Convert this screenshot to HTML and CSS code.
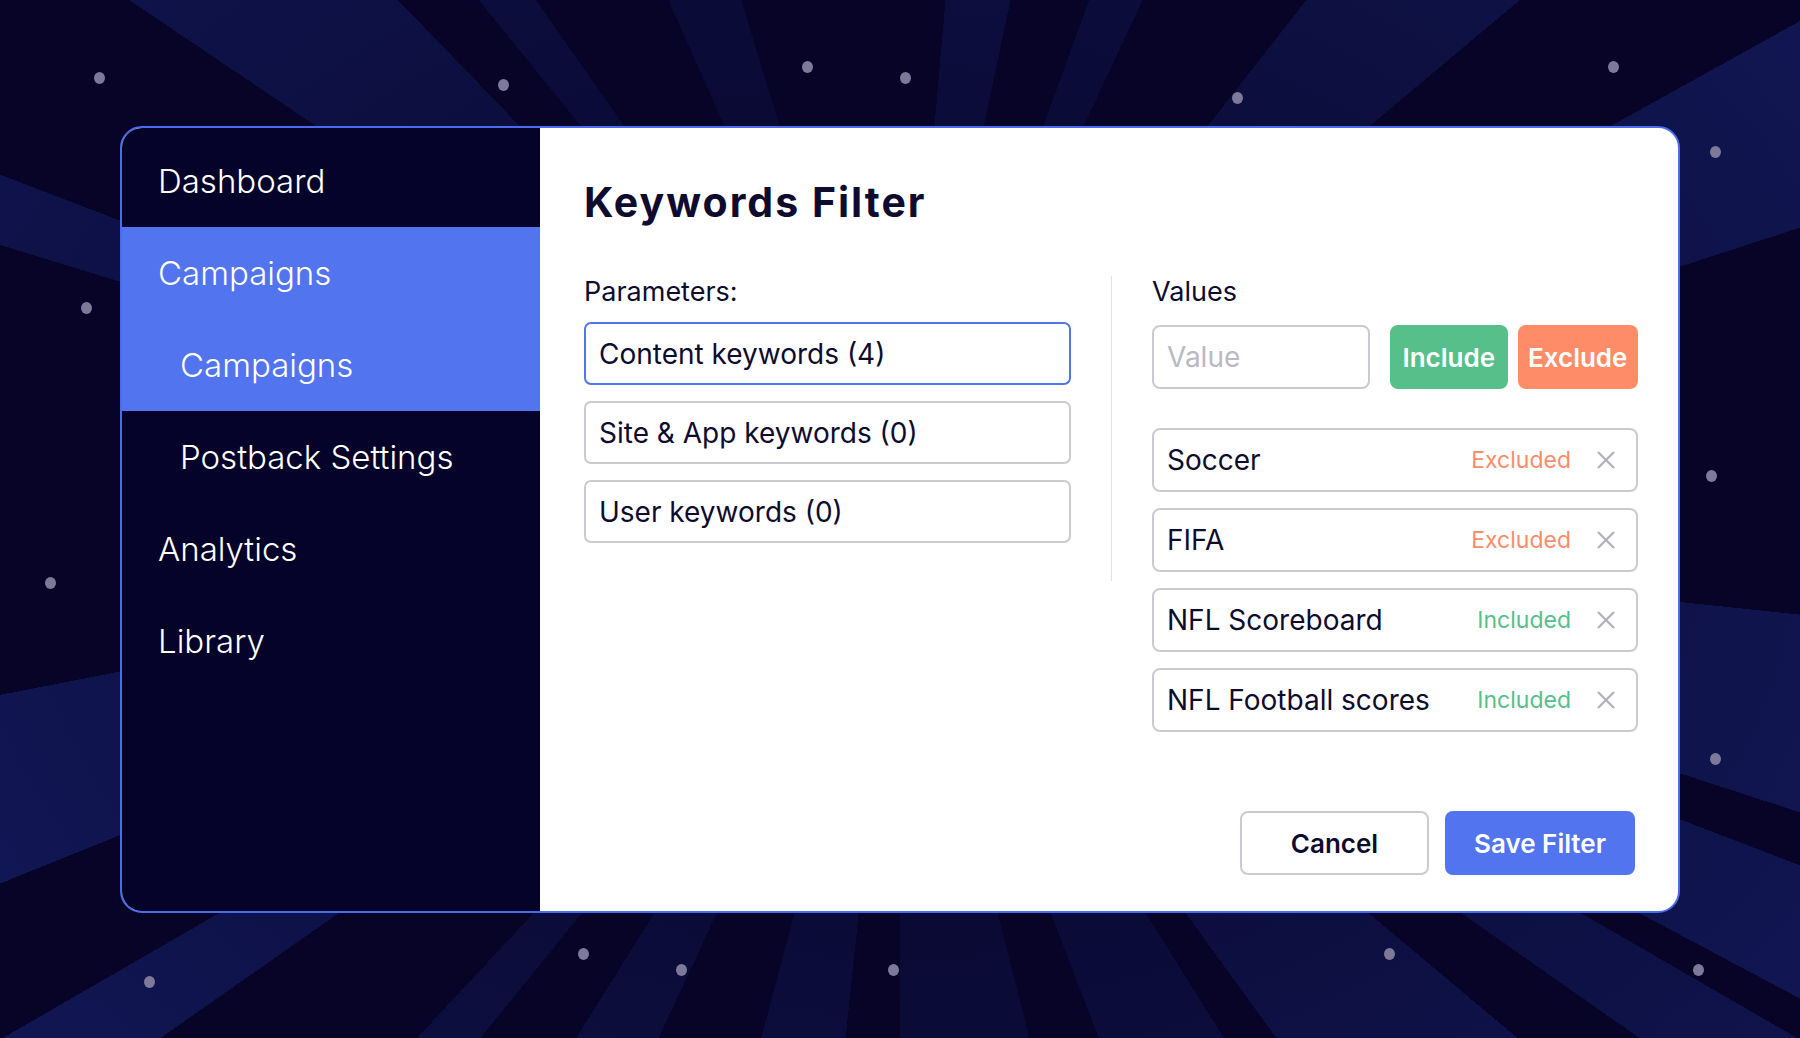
FILE: index.html
```html
<!DOCTYPE html>
<html lang="en">
<head>
    <meta charset="UTF-8">
    <title>Keywords Filter</title>
    <link rel="stylesheet" href="styles.css">
</head>
<body>
    <div class="stars">
        <span class="dot d1"></span><span class="dot d2"></span><span class="dot d3"></span>
        <span class="dot d4"></span><span class="dot d5"></span><span class="dot d6"></span>
        <span class="dot d7"></span><span class="dot d8"></span><span class="dot d9"></span>
        <span class="dot d10"></span><span class="dot d11"></span><span class="dot d12"></span>
        <span class="dot d13"></span><span class="dot d14"></span><span class="dot d15"></span>
        <span class="dot d16"></span><span class="dot d17"></span>
    </div>

    <div class="dialog">
        <nav class="sidebar">
            <div class="nav-item">Dashboard</div>
            <div class="nav-item active">Campaigns</div>
            <div class="nav-item sub active">Campaigns</div>
            <div class="nav-item sub">Postback Settings</div>
            <div class="nav-item">Analytics</div>
            <div class="nav-item">Library</div>
        </nav>

        <main class="panel">
            <h1>Keywords Filter</h1>

            <div class="columns">
                <div class="params">
                    <div class="label">Parameters:</div>
                    <div class="param-list">
                        <div class="param selected">Content keywords (4)</div>
                        <div class="param">Site &amp; App keywords (0)</div>
                        <div class="param">User keywords (0)</div>
                    </div>
                </div>

                <div class="divider"></div>

                <div class="values">
                    <div class="label">Values</div>
                    <div class="value-entry">
                        <input type="text" class="value-input" placeholder="Value">
                        <button class="btn-include">Include</button>
                        <button class="btn-exclude">Exclude</button>
                    </div>

                    <div class="value-list">
                        <div class="value-row">
                            <span class="value-name">Soccer</span>
                            <span class="status excluded">Excluded</span>
                            <svg class="remove" viewBox="0 0 18 18"><path d="M1 1L17 17M17 1L1 17"/></svg>
                        </div>
                        <div class="value-row">
                            <span class="value-name">FIFA</span>
                            <span class="status excluded">Excluded</span>
                            <svg class="remove" viewBox="0 0 18 18"><path d="M1 1L17 17M17 1L1 17"/></svg>
                        </div>
                        <div class="value-row">
                            <span class="value-name">NFL Scoreboard</span>
                            <span class="status included">Included</span>
                            <svg class="remove" viewBox="0 0 18 18"><path d="M1 1L17 17M17 1L1 17"/></svg>
                        </div>
                        <div class="value-row">
                            <span class="value-name">NFL Football scores</span>
                            <span class="status included">Included</span>
                            <svg class="remove" viewBox="0 0 18 18"><path d="M1 1L17 17M17 1L1 17"/></svg>
                        </div>
                    </div>
                </div>
            </div>

            <div class="footer">
                <button class="btn-cancel">Cancel</button>
                <button class="btn-save">Save Filter</button>
            </div>
        </main>
    </div>
</body>
</html>
```

FILE: styles.css
```css
html, body {
    margin: 0;
    height: 100%;
}

body {
    position: relative;
    overflow: hidden;
    box-sizing: border-box;
    padding: 126px 0 0 120px;
    font-family: Inter, "Noto Sans", Arial, sans-serif;
    color: #0e0b2e;
    background-color: #070428;
    background-image:
        radial-gradient(ellipse 1100px 800px at 900px 520px, rgba(7,4,40,0.85) 0%, rgba(7,4,40,0.45) 55%, rgba(7,4,40,0.1) 100%),
        conic-gradient(from 0deg at 900px 520px,
            #070428 0deg 5deg, #0f1349 5deg 12deg,
            #070428 12deg 20deg, #0d1144 20deg 25deg,
            #070428 25deg 38deg, #10154c 38deg 50deg,
            #070428 50deg 61deg, #121856 61deg 72deg,
            #070428 72deg 96deg, #131a5a 96deg 108deg,
            #070428 108deg 111deg, #121857 111deg 118deg,
            #070428 118deg 120deg, #10154e 120deg 125deg,
            #070428 125deg 130deg, #111650 130deg 144deg,
            #070428 144deg 148deg, #0d1144 148deg 159deg,
            #070428 159deg 166deg, #0c1040 166deg 180deg,
            #070428 180deg 186deg, #0e1246 186deg 195deg,
            #070428 195deg 205deg, #0e1245 205deg 212deg,
            #070428 212deg 219deg, #0e1246 219deg 223deg,
            #070428 223deg 235deg, #121857 235deg 240deg,
            #070428 240deg 248deg, #131a5c 248deg 259deg,
            #070428 259deg 287deg, #111652 287deg 291deg,
            #070428 291deg 304deg, #10154e 304deg 316deg,
            #070428 316deg 321deg, #0d1144 321deg 325deg,
            #070428 325deg 336deg, #0c1040 336deg 343deg,
            #070428 343deg 360deg);
}

.stars {
    position: absolute;
    inset: 0;
}

.dot {
    position: absolute;
    width: 11px;
    height: 12px;
    border-radius: 50%;
    background-color: #7c7a98;
}

.d1 { left: 94px; top: 72px; }
.d2 { left: 498px; top: 79px; }
.d3 { left: 802px; top: 61px; }
.d4 { left: 900px; top: 72px; }
.d5 { left: 1232px; top: 92px; }
.d6 { left: 1608px; top: 61px; }
.d7 { left: 1710px; top: 146px; }
.d8 { left: 81px; top: 302px; }
.d9 { left: 1706px; top: 470px; }
.d10 { left: 45px; top: 577px; }
.d11 { left: 1710px; top: 753px; }
.d12 { left: 144px; top: 976px; }
.d13 { left: 578px; top: 948px; }
.d14 { left: 676px; top: 964px; }
.d15 { left: 888px; top: 964px; }
.d16 { left: 1384px; top: 948px; }
.d17 { left: 1693px; top: 964px; }

.dialog {
    position: relative;
    display: flex;
    box-sizing: border-box;
    width: 1560px;
    height: 787px;
    border: 2px solid #4b6bef;
    border-radius: 22px;
    overflow: hidden;
    background-color: white;
}

/* sidebar */
.sidebar {
    width: 418px;
    flex-shrink: 0;
    padding-top: 7px;
    background-color: #06032a;
}

.nav-item {
    display: flex;
    align-items: center;
    height: 92px;
    padding-left: 36px;
    font-size: 33px;
    font-weight: 300;
    color: white;
}

.nav-item.sub {
    padding-left: 58px;
}

.nav-item.active {
    background-color: #5274ee;
}

/* main panel */
.panel {
    flex: 1;
    display: flex;
    flex-direction: column;
    padding: 50px 40px 36px 44px;
}

h1 {
    margin: 0;
    font-size: 41px;
    line-height: 48px;
    font-weight: 700;
    letter-spacing: 2px;
}

.columns {
    display: flex;
    margin-top: 50px;
}

.params {
    width: 487px;
}

.values {
    width: 486px;
}

.divider {
    width: 1px;
    height: 305px;
    margin: 0 40px;
    background-color: #e1e1e7;
}

.label {
    font-size: 27px;
    line-height: 32px;
    margin-bottom: 14px;
}

.values .label {
    margin-bottom: 17px;
}

.param-list {
    display: flex;
    flex-direction: column;
    gap: 16px;
}

.param {
    display: flex;
    align-items: center;
    box-sizing: border-box;
    height: 63px;
    padding: 0 13px;
    border: 2px solid #cacad2;
    border-radius: 7px;
    font-size: 28px;
}

.param.selected {
    border-color: #5274ee;
}

.value-entry {
    display: flex;
    height: 64px;
}

.value-input {
    box-sizing: border-box;
    width: 218px;
    height: 64px;
    padding: 0 13px;
    border: 2px solid #cacad2;
    border-radius: 8px;
    font-family: inherit;
    font-size: 28px;
    color: #0e0b2e;
    outline: none;
}

.value-input::placeholder {
    color: #babac5;
}

button {
    box-sizing: border-box;
    height: 64px;
    border: none;
    border-radius: 8px;
    font-family: inherit;
    font-size: 26px;
    font-weight: 600;
    cursor: pointer;
}

.btn-include {
    width: 118px;
    margin-left: 20px;
    background-color: #57c08a;
    color: white;
}

.btn-exclude {
    width: 121px;
    margin-left: 10px;
    background-color: #ff8c69;
    color: white;
}

.value-list {
    display: flex;
    flex-direction: column;
    gap: 16px;
    margin-top: 39px;
}

.value-row {
    display: flex;
    align-items: center;
    box-sizing: border-box;
    height: 64px;
    padding: 0 21px 0 13px;
    border: 2px solid #cacad2;
    border-radius: 8px;
}

.value-name {
    font-size: 28px;
}

.status {
    margin-left: auto;
    font-size: 23px;
}

.excluded {
    color: #ff8c69;
}

.included {
    color: #57c08a;
}

.remove {
    width: 18px;
    height: 18px;
    margin-left: 26px;
    fill: none;
    stroke: #b3b3bf;
    stroke-width: 2.4;
}

.footer {
    display: flex;
    justify-content: flex-end;
    gap: 16px;
    margin-top: auto;
    margin-right: 3px;
}

.btn-cancel {
    width: 189px;
    border: 2px solid #cacad2;
    background-color: white;
    color: #0e0b2e;
}

.btn-save {
    width: 190px;
    background-color: #5274ee;
    color: white;
}
```
